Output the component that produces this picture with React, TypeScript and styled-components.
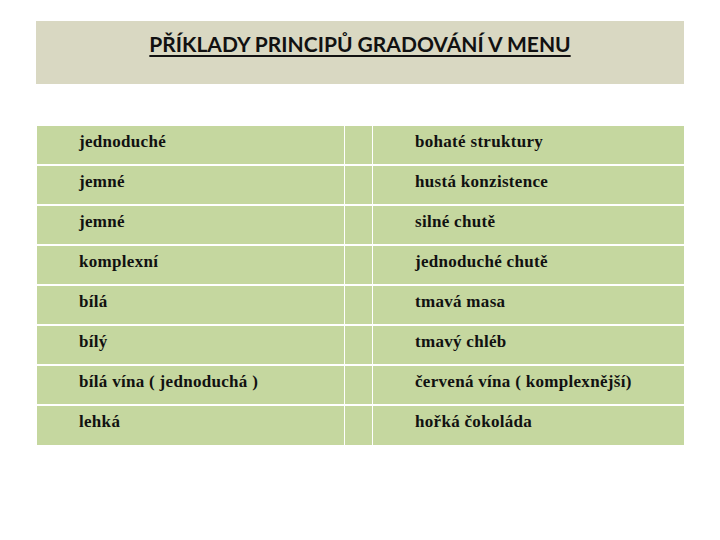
import styled, {createGlobalStyle} from "styled-components";

const GlobalStyle = createGlobalStyle`
  body {
    margin: 0;
    background: #ffffff;
  }
`;

const Page = styled.div`
  width: 720px;
  height: 540px;
  padding: 21px 36px 0 36px;
  box-sizing: border-box;
  display: flex;
  flex-direction: column;
  gap: 40px;
`;

const TitleBox = styled.div`
  height: 63px;
  background: #d9d8c2;
  display: flex;
  justify-content: center;
  padding-top: 10px;
  box-sizing: border-box;
`;

const Title = styled.h1`
  margin: 0;
  font-family: "Lato", "Open Sans", sans-serif;
  font-weight: 700;
  font-size: 21px;
  line-height: 26px;
  color: #111;
  text-decoration: underline;
  text-underline-offset: 3px;
  text-decoration-thickness: 1.5px;
`;

const Table = styled.table`
  width: 648px;
  border-collapse: collapse;
  table-layout: fixed;
`;

const Row = styled.tr`
  height: 40px;
`;

const Cell = styled.td`
  padding: 0 0 6px 42px;
  background: #c5d79f;
  border: 1px solid #ffffff;
  border-top-width: 2px;
  font-family: "Liberation Serif", "Times New Roman", serif;
  font-weight: bold;
  font-size: 17px;
  line-height: 20px;
  letter-spacing: 0.3px;
  color: #111;
  vertical-align: middle;
  white-space: nowrap;
`;

const Spacer = styled.td`
  padding: 0;
  background: #c5d79f;
  border: 1px solid #ffffff;
  border-top-width: 2px;
`;

const rows: [string, string][] = [
  ["jednoduché", "bohaté struktury"],
  ["jemné", "hustá konzistence"],
  ["jemné", "silné chutě"],
  ["komplexní", "jednoduché chutě"],
  ["bílá", "tmavá masa"],
  ["bílý", "tmavý chléb"],
  ["bílá vína ( jednoduchá )", "červená vína ( komplexnější)"],
  ["lehká", "hořká čokoláda"],
];

export default function App() {
  return (
    <>
      <GlobalStyle />
      <Page>
        <TitleBox>
          <Title>PŘÍKLADY PRINCIPŮ GRADOVÁNÍ V MENU</Title>
        </TitleBox>
        <Table>
          <colgroup>
            <col style={{width: 308}} />
            <col style={{width: 28}} />
            <col style={{width: 312}} />
          </colgroup>
          <tbody>
            {rows.map(([left, right], i) => (
              <Row key={i}>
                <Cell>{left}</Cell>
                <Spacer />
                <Cell>{right}</Cell>
              </Row>
            ))}
          </tbody>
        </Table>
      </Page>
    </>
  );
}
